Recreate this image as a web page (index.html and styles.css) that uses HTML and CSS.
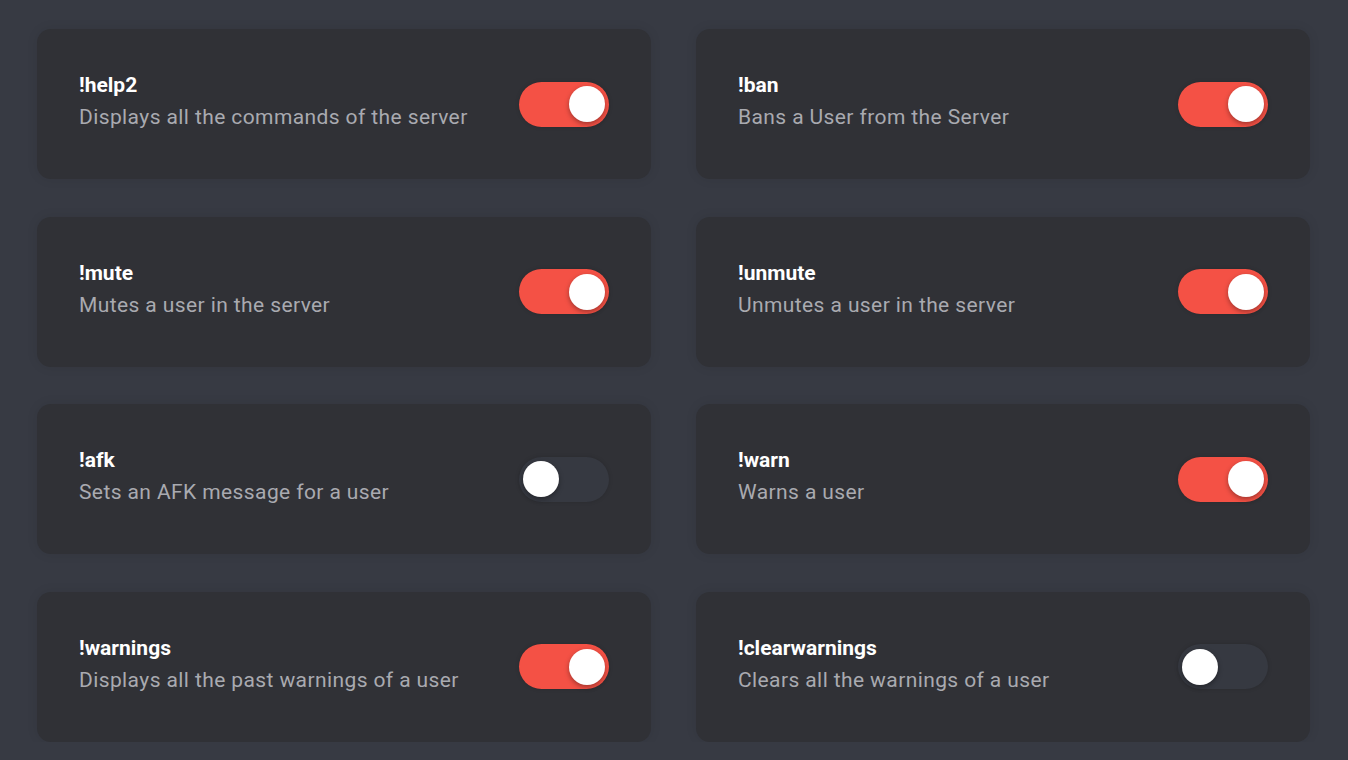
FILE: index.html
```html
<!DOCTYPE html>
<html lang="en">
<head>
<meta charset="utf-8">
<title>Commands</title>
<link rel="stylesheet" href="styles.css">
</head>
<body>
<main class="grid">
  <section class="card">
    <div class="info"><h3 class="name">!help2</h3><p class="desc">Displays all the commands of the server</p></div>
    <span class="toggle on"><span class="knob"></span></span>
  </section>
  <section class="card">
    <div class="info"><h3 class="name">!ban</h3><p class="desc">Bans a User from the Server</p></div>
    <span class="toggle on"><span class="knob"></span></span>
  </section>
  <section class="card">
    <div class="info"><h3 class="name">!mute</h3><p class="desc">Mutes a user in the server</p></div>
    <span class="toggle on"><span class="knob"></span></span>
  </section>
  <section class="card">
    <div class="info"><h3 class="name">!unmute</h3><p class="desc">Unmutes a user in the server</p></div>
    <span class="toggle on"><span class="knob"></span></span>
  </section>
  <section class="card">
    <div class="info"><h3 class="name">!afk</h3><p class="desc">Sets an AFK message for a user</p></div>
    <span class="toggle"><span class="knob"></span></span>
  </section>
  <section class="card">
    <div class="info"><h3 class="name">!warn</h3><p class="desc">Warns a user</p></div>
    <span class="toggle on"><span class="knob"></span></span>
  </section>
  <section class="card">
    <div class="info"><h3 class="name">!warnings</h3><p class="desc">Displays all the past warnings of a user</p></div>
    <span class="toggle on"><span class="knob"></span></span>
  </section>
  <section class="card">
    <div class="info"><h3 class="name">!clearwarnings</h3><p class="desc">Clears all the warnings of a user</p></div>
    <span class="toggle"><span class="knob"></span></span>
  </section>
</main>
</body>
</html>
```
FILE: styles.css
```css
html, body {
  margin: 0;
  padding: 0;
  background: #373a43;
  font-family: Roboto, "Noto Sans", sans-serif;
}
.grid {
  display: grid;
  grid-template-columns: 614px 614px;
  column-gap: 45px;
  row-gap: 37.5px;
  padding: 29px 38px 0 37px;
}
.card {
  height: 150px;
  box-sizing: border-box;
  background: #303136;
  border-radius: 14px;
  padding: 0 42px;
  display: flex;
  align-items: center;
  justify-content: space-between;
  box-shadow: 0 0 12px rgba(0, 0, 0, 0.08);
}
.info {
  display: flex;
  flex-direction: column;
  padding-bottom: 6px;
}
.name {
  margin: 0;
  font-size: 21px;
  font-weight: 700;
  line-height: 32px;
  color: #ffffff;
}
.desc {
  margin: 0;
  font-size: 21px;
  letter-spacing: 0.4px;
  line-height: 32px;
  color: #a9aab0;
}
.toggle {
  width: 90px;
  height: 45px;
  border-radius: 23px;
  background: #363941;
  display: flex;
  align-items: center;
  padding: 0 4px;
  box-sizing: border-box;
  box-shadow: 0 0 4px rgba(0, 0, 0, 0.15);
}
.toggle.on {
  background: #f45145;
  justify-content: flex-end;
}
.knob {
  width: 36px;
  height: 36px;
  border-radius: 50%;
  background: #ffffff;
  box-shadow: 0 2px 5px rgba(0, 0, 0, 0.35);
}
```
